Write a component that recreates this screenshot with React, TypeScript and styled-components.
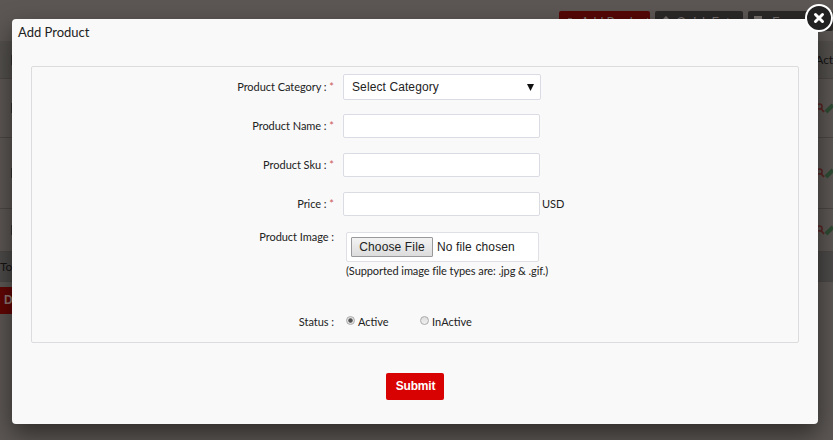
import React from 'react';
import styled, { createGlobalStyle } from 'styled-components';

const GlobalStyle = createGlobalStyle`
  *, *::before, *::after { box-sizing: border-box; }
  body { margin: 0; overflow: hidden; background: #5c5754; }
`;

const Screen = styled.div`
  position: relative;
  width: 833px;
  height: 440px;
  overflow: hidden;
  color: #222;
  font: 11px/16px Lato, sans-serif;
`;

const Page = styled.div`
  height: 440px;
  display: flex;
  flex-direction: column;
  background: #5c5754;
`;

const Toolbar = styled.div`
  height: 41px;
  padding-top: 11px;
  display: flex;
  justify-content: flex-end;
  gap: 5px;
`;

const ToolButton = styled.div<{ $danger?: boolean; $width: number }>`
  width: ${p => p.$width}px;
  height: 20px;
  padding: 2px 0 0 ${p => (p.$danger ? 8 : 6)}px;
  display: flex;
  align-items: center;
  gap: 5px;
  border-radius: 2px;
  background: ${p => (p.$danger ? '#560806' : '#2b2928')};
  color: #77716e;
  font-size: 13px;
  letter-spacing: -0.2px;
  white-space: nowrap;
`;

const TableRow = styled.div<{ $height: number; $bg?: string }>`
  height: ${p => p.$height}px;
  display: flex;
  align-items: center;
  justify-content: space-between;
  border-bottom: 1px solid #4b4745;
  background: ${p => p.$bg || '#5c5754'};
`;

const EdgeMark = styled.span`
  width: 3px;
  height: 10px;
  margin-left: 11px;
  background: #353231;
`;

const CellLabel = styled.span`
  color: #151413;
  font-size: 12px;
  letter-spacing: -0.1px;
`;

const RowActions = styled.span`
  width: 16px;
  height: 14px;
  display: flex;
`;

const DeleteButton = styled.div`
  width: 60px;
  height: 27px;
  margin-top: 5px;
  padding-left: 4px;
  background: #610604;
  color: #8e7773;
  font: bold 12px/26px 'Liberation Sans', Arial, sans-serif;
`;

const Dialog = styled.section`
  position: absolute;
  left: 12px;
  top: 19px;
  width: 806px;
  height: 405px;
  display: flex;
  flex-direction: column;
  align-items: center;
  border-radius: 4px;
  background: #f9f9f9;
  box-shadow: 0 10px 25px rgba(0, 0, 0, 0.5);
`;

const Title = styled.h1`
  align-self: flex-start;
  height: 47px;
  margin: 0;
  padding: 4px 0 0 6px;
  color: #222;
  font: 13px/18px Lato, sans-serif;
`;

const CloseButton = styled.button`
  position: absolute;
  right: -16px;
  top: -16px;
  width: 30px;
  height: 30px;
  padding: 0;
  border: 0;
  background: none;
`;

const Form = styled.form`
  width: 768px;
  height: 277px;
  padding-top: 7px;
  border: 1px solid #dcdcdf;
  border-radius: 2px;
`;

const Field = styled.div<{ $height: number }>`
  height: ${p => p.$height}px;
  display: flex;
  align-items: flex-start;
`;

const Label = styled.div<{ $top?: number }>`
  width: 302px;
  margin-top: ${p => p.$top ?? 4}px;
  text-align: right;
  white-space: pre;
  letter-spacing: -0.04px;
`;

const Required = styled.span`
  color: #d05a5a;
`;

const Control = styled.div<{ $indent?: number; $top?: number }>`
  margin-left: ${p => p.$indent ?? 9}px;
  padding-top: ${p => p.$top ?? 0}px;
`;

const InputLine = styled.div`
  display: flex;
  align-items: center;
  gap: 2px;
`;

const TextInput = styled.input`
  width: 197px;
  height: 24px;
  padding: 0 8px;
  border: 1px solid #dbdce3;
  border-radius: 2px;
  background: #fff;
`;

const SelectBox = styled.div`
  width: 198px;
  height: 26px;
  padding: 0 6px 0 8px;
  display: flex;
  align-items: center;
  justify-content: space-between;
  border: 1px solid #dbdce3;
  border-radius: 2px;
  background: #fff;
  font: 12px/24px 'Liberation Sans', Arial, sans-serif;
  letter-spacing: 0.1px;
`;

const FileBox = styled.div`
  width: 193px;
  height: 30px;
  padding-left: 4px;
  display: flex;
  align-items: center;
  gap: 4px;
  border: 1px solid #dfe0e5;
  border-radius: 2px;
  background: #fff;
  font: 12px/18px 'Liberation Sans', Arial, sans-serif;
  letter-spacing: 0.13px;
`;

const FileButton = styled.div`
  width: 82px;
  height: 20px;
  border: 1px solid #999;
  border-radius: 1px;
  background: linear-gradient(#f3f3f3, #dcdcdc);
  text-align: center;
`;

const Hint = styled.div`
  margin-top: 1px;
  letter-spacing: -0.08px;
  white-space: nowrap;
`;

const RadioGroup = styled.div`
  display: flex;
  padding-top: 4px;
`;

const RadioOption = styled.label`
  width: 74px;
  display: flex;
  gap: 3px;
`;

const RadioDot = styled.span<{ $checked?: boolean }>`
  width: 9px;
  height: 9px;
  margin-top: 2px;
  border: 1px solid #aaa;
  border-radius: 50%;
  background: ${p =>
    p.$checked
      ? 'radial-gradient(circle, #555 0 1.8px, #e2e2e2 2.6px)'
      : 'linear-gradient(#dedede, #f0f0f0)'};
`;

const Submit = styled.button`
  width: 58px;
  height: 27px;
  margin-top: 30px;
  padding: 0 0 1px 1px;
  border: 0;
  border-radius: 2px;
  background: #d90202;
  color: #fff;
  font: bold 12px/24px 'Liberation Sans', Arial, sans-serif;
  letter-spacing: -0.2px;
`;

const ActionIcons = () => (
  <RowActions>
    <svg width="16" height="14" viewBox="0 0 16 14" fill="none">
      <circle cx="2.5" cy="5.5" r="2.6" stroke="#5b2523" strokeWidth="1.5" />
      <path d="M4 7.500l3 3.500" stroke="#5b2523" strokeWidth="1.800" />
      <path d="M9 11l7-7" stroke="#2e4b33" strokeWidth="4" />
    </svg>
  </RowActions>
);

const textFields = [
  { name: 'Product Name :', unit: '' },
  { name: 'Product Sku :', unit: '' },
  { name: 'Price :', unit: 'USD' },
];

export default function App() {
  return (
    <>
      <GlobalStyle />
      <Screen>
        <Page>
          <Toolbar>
            <ToolButton $width={91} $danger>
              <svg width="9" height="11" viewBox="0 0 9 11" fill="#77716e"><path d="M1 1h4v4h4v3H6v3H3V8H0V5h1z" /></svg>
              Add Product
            </ToolButton>
            <ToolButton $width={88}>
              <svg width="10" height="12" viewBox="0 0 10 12" fill="#77716e"><path d="M5 0l4 4H7v8H3V4H1z" /></svg>
              Quick Entry
            </ToolButton>
            <ToolButton $width={85}>
              <svg width="13" height="12" viewBox="0 0 13 12" fill="#77716e"><path d="M0 0h8v3h3l2 3H9v6H0z" /></svg>
              Export
            </ToolButton>
          </Toolbar>
          <TableRow $height={38} $bg="#53504d"><EdgeMark /><CellLabel>Act</CellLabel></TableRow>
          <TableRow $height={59}><EdgeMark /><ActionIcons /></TableRow>
          <TableRow $height={71}><EdgeMark /><ActionIcons /></TableRow>
          <TableRow $height={43}><EdgeMark /><ActionIcons /></TableRow>
          <TableRow $height={30} $bg="#4c4a49"><CellLabel>Total</CellLabel></TableRow>
          <DeleteButton>Delete</DeleteButton>
        </Page>
        <Dialog>
          <Title>Add Product</Title>
          <Form>
            <Field $height={40}>
              <Label $top={5}>Product Category : <Required>*</Required></Label>
              <Control>
                <SelectBox>
                  Select Category
                  <svg width="7" height="7" viewBox="0 0 7 7"><path d="M0 0h7L3.500 7z" fill="#111" /></svg>
                </SelectBox>
              </Control>
            </Field>
            {textFields.map(({ name, unit }) => (
              <Field key={name} $height={39}>
                <Label>{name} <Required>*</Required></Label>
                <Control>
                  <InputLine><TextInput aria-label={name} />{unit}</InputLine>
                </Control>
              </Field>
            ))}
            <Field $height={79}>
              <Label $top={-2}>Product Image :</Label>
              <Control $indent={12} $top={1}>
                <FileBox><FileButton>Choose File</FileButton>No file chosen</FileBox>
                <Hint>(Supported image file types are: .jpg &amp; .gif.)</Hint>
              </Control>
            </Field>
            <Field $height={26}>
              <Label>Status :</Label>
              <Control $indent={12}>
                <RadioGroup>
                  <RadioOption><RadioDot $checked />Active</RadioOption>
                  <RadioOption><RadioDot />InActive</RadioOption>
                </RadioGroup>
              </Control>
            </Field>
          </Form>
          <Submit type="button">Submit</Submit>
          <CloseButton aria-label="Close">
            <svg width="30" height="30" viewBox="0 0 30 30">
              <circle cx="15" cy="15" r="13" fill="#222" stroke="#fff" strokeWidth="2" />
              <path d="M11.500 11.500l7 7M18.500 11.500l-7 7" stroke="#fff" strokeWidth="3" strokeLinecap="round" />
            </svg>
          </CloseButton>
        </Dialog>
      </Screen>
    </>
  );
}
